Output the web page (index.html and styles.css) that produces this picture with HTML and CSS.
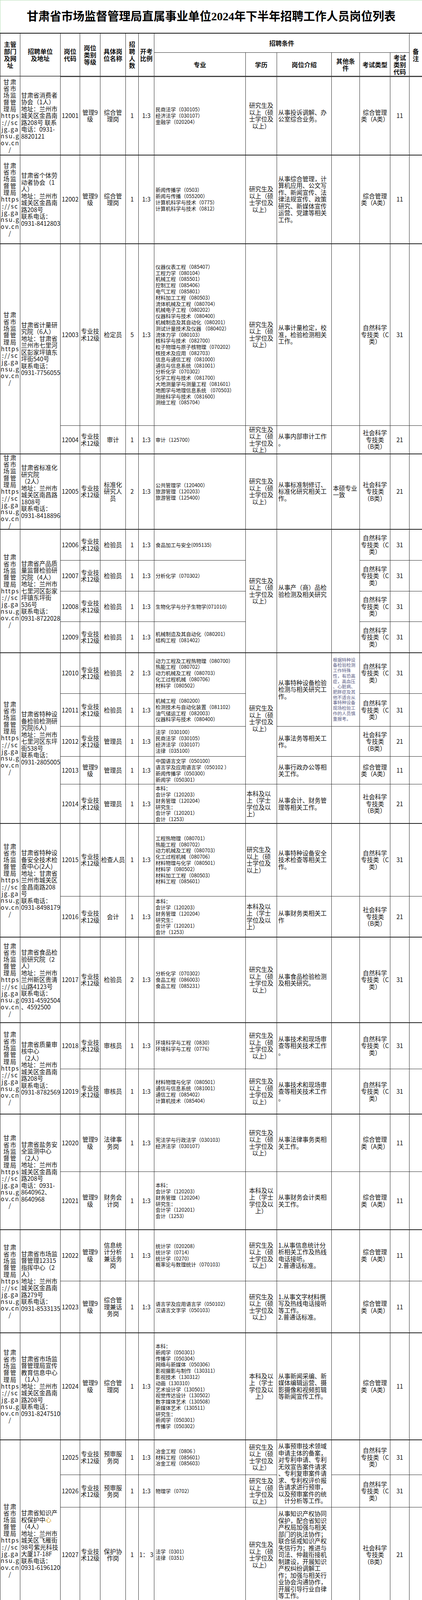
FILE: index.html
```html
<!DOCTYPE html>
<html lang="zh-CN">
<head>
<meta charset="utf-8">
<title>甘肃省市场监督管理局直属事业单位2024年下半年招聘工作人员岗位列表</title>
<link rel="stylesheet" href="styles.css">
</head>
<body>
<div class="page">
  <header class="title-bar"><h1 class="title">甘肃省市场监督管理局直属事业单位2024年下半年招聘工作人员岗位列表</h1></header>
  <div class="sheet">
    <div class="cell h r2"><span>主管<br>部门<br>及网<br>址</span></div>
    <div class="cell h r2"><span>招聘单位<br>及地址</span></div>
    <div class="cell h r2"><span>岗位<br>代码</span></div>
    <div class="cell h r2"><span>岗位<br>类别<br>等级</span></div>
    <div class="cell h r2"><span>具体岗<br>位名称</span></div>
    <div class="cell h r2"><span>招<br>聘<br>人<br>数</span></div>
    <div class="cell h r2"><span>开考<br>比例</span></div>
    <div class="cell h cond cs6"><span>招聘条件</span></div>
    <div class="cell h r2 note"><span>备<br>注</span></div>
    <div class="cell h"><span>专业</span></div>
    <div class="cell h"><span>学历</span></div>
    <div class="cell h"><span>岗位介绍</span></div>
    <div class="cell h"><span>其他条<br>件</span></div>
    <div class="cell h"><span>考试类型</span></div>
    <div class="cell h"><span>考试<br>类别<br>代码</span></div>

    <!-- 12001 -->
    <div class="cell d"><span>甘肃<br>省市<br>场监<br>督管<br>理局<br>https<br>://sc<br>jg.ga<br>nsu.g<br>ov.cn<br>/</span></div>
    <div class="cell n"><span>甘肃省消费者<br>协会（1人）<br>地址：兰州市<br>城关区金昌南<br>路208号 联系<br>电话：0931-<br>8820121</span></div>
    <div class="cell c u"><span>12001</span></div>
    <div class="cell c u"><span>管理9<br>级</span></div>
    <div class="cell c u"><span>综合管<br>理岗</span></div>
    <div class="cell c u"><span>1</span></div>
    <div class="cell c u"><span>1:3</span></div>
    <div class="cell m u"><span>民商法学（030105）<br>经济法学（030107）<br>金融学（020204）</span></div>
    <div class="cell c u"><span>研究生及<br>以上（硕<br>士学位及<br>以上）</span></div>
    <div class="cell t u"><span>从事投诉调解、办<br>公室综合业务。</span></div>
    <div class="cell t u"></div>
    <div class="cell c u"><span>综合管理<br>类（A类）</span></div>
    <div class="cell c u"><span>11</span></div>
    <div class="cell note u"></div>

    <!-- 12002 -->
    <div class="cell d u"><span>甘肃<br>省市<br>场监<br>督管<br>理局<br>https<br>://sc<br>jg.ga<br>nsu.g<br>ov.cn<br>/</span></div>
    <div class="cell n u"><span>甘肃省个体劳<br>动者协会（1<br>人）<br>地址：兰州市<br>城关区金昌南<br>路208号<br>联系电话：<br>0931-8412803</span></div>
    <div class="cell c u"><span>12002</span></div>
    <div class="cell c u"><span>管理9<br>级</span></div>
    <div class="cell c u"><span>综合管<br>理岗</span></div>
    <div class="cell c u"><span>1</span></div>
    <div class="cell c u"><span>1:3</span></div>
    <div class="cell m u"><span>新闻传播学（0503）<br>新闻与传播（055200）<br>计算机科学与技术（0775）<br>计算机科学与技术（0812）</span></div>
    <div class="cell c u"><span>研究生及<br>以上（硕<br>士学位及<br>以上）</span></div>
    <div class="cell t u"><span>从事综合管理，计<br>算机应用、公文写<br>作、新闻宣传、法<br>律法规宣传、政策<br>研究、新媒体宣传<br>运营、党建等相关<br>工作。</span></div>
    <div class="cell t u"></div>
    <div class="cell c u"><span>综合管理<br>类（A类）</span></div>
    <div class="cell c u"><span>11</span></div>
    <div class="cell note u"></div>

    <!-- 12003 / 12004 -->
    <div class="cell d u r2"><span>甘肃<br>省市<br>场监<br>督管<br>理局<br>https<br>://sc<br>jg.ga<br>nsu.g<br>ov.cn<br>/</span></div>
    <div class="cell n u r2"><span>甘肃省计量研<br>究院（6人）<br>地址：甘肃省<br>兰州市七里河<br>区彭家坪镇东<br>坪街540号<br>联系电话：<br>0931-7756055</span></div>
    <div class="cell c u"><span>12003</span></div>
    <div class="cell c u"><span>专业技<br>术12级</span></div>
    <div class="cell c u"><span>检定员</span></div>
    <div class="cell c u"><span>5</span></div>
    <div class="cell c u"><span>1:3</span></div>
    <div class="cell m u"><span>仪器仪表工程（085407）<br>工程力学（080104）<br>机械工程（085501）<br>控制工程（085406）<br>电气工程（085801）<br>材料加工工程（080503）<br>流体机械及工程（080704）<br>机械电子工程（080202）<br>仪器科学与技术（080400）<br>机械制造及其自动化（080201）<br>测试计量技术及仪器 （080402）<br>流体力学（080103）<br>核科学与技术（082700）<br>粒子物理与原子核物理（070202）<br>核技术及应用（082703）<br>信息与通信工程（081000）<br>通信与信息系统（081001）<br>分析化学（070302）<br>化学工程与技术（081700）<br>大地测量学与测量工程（081601）<br>地图学与地理信息系统 （070503）<br>测绘科学与技术（081600）<br>测绘工程（085704）</span></div>
    <div class="cell c u"><span>研究生及<br>以上（硕<br>士学位及<br>以上）</span></div>
    <div class="cell t u"><span>从事计量检定，校<br>准，检验检测相关<br>工作。</span></div>
    <div class="cell t u"></div>
    <div class="cell c u"><span>自然科学<br>专技类（C<br>类）</span></div>
    <div class="cell c u"><span>31</span></div>
    <div class="cell note u"></div>

    <div class="cell c"><span>12004</span></div>
    <div class="cell c"><span>专业技<br>术12级</span></div>
    <div class="cell c"><span>审计</span></div>
    <div class="cell c"><span>1</span></div>
    <div class="cell c"><span>1:3</span></div>
    <div class="cell m"><span>审计（125700）</span></div>
    <div class="cell c"><span>研究生及<br>以上（硕<br>士学位及<br>以上）</span></div>
    <div class="cell t"><span>从事内部审计工作<br>。</span></div>
    <div class="cell t"></div>
    <div class="cell c"><span>社会科学<br>专技类<br>（B类）</span></div>
    <div class="cell c"><span>21</span></div>
    <div class="cell note"></div>

    <!-- 12005 -->
    <div class="cell d u"><span>甘肃<br>省市<br>场监<br>督管<br>理局<br>https<br>://sc<br>jg.ga<br>nsu.g<br>ov.cn<br>/</span></div>
    <div class="cell n u"><span>甘肃省标准化<br>研究院<br>（2人）<br>地址：兰州市<br>城关区南昌路<br>1808号<br>联系电话：<br>0931-8418896</span></div>
    <div class="cell c u"><span>12005</span></div>
    <div class="cell c u"><span>专业技<br>术12级</span></div>
    <div class="cell c u"><span>标准化<br>研究人<br>员</span></div>
    <div class="cell c u"><span>2</span></div>
    <div class="cell c u"><span>1:3</span></div>
    <div class="cell m u"><span>公共管理学（120400）<br>旅游管理（120203）<br>旅游管理（125400）</span></div>
    <div class="cell c u"><span>研究生及<br>以上（硕<br>士学位及<br>以上）</span></div>
    <div class="cell t u"><span>从事标准制修订、<br>标准化研究相关工<br>作。</span></div>
    <div class="cell t u"><span>本硕专业<br>一致</span></div>
    <div class="cell c u"><span>社会科学<br>专技类<br>（B类）</span></div>
    <div class="cell c u"><span>21</span></div>
    <div class="cell note u"></div>

    <!-- 12006 - 12009 -->
    <div class="cell d u r4"><span>甘肃<br>省市<br>场监<br>督管<br>理局<br>https<br>://sc<br>jg.ga<br>nsu.g<br>ov.cn<br>/</span></div>
    <div class="cell n u r4"><span>甘肃省产品质<br>量监督检验研<br>究院（4人）<br>地址：兰州市<br>七里河区彭家<br>坪镇东坪街<br>536号<br>联系电话：<br>0931-8722028</span></div>
    <div class="cell c u"><span>12006</span></div>
    <div class="cell c u"><span>专业技<br>术12级</span></div>
    <div class="cell c u"><span>检验员</span></div>
    <div class="cell c u"><span>1</span></div>
    <div class="cell c u"><span>1:3</span></div>
    <div class="cell m u"><span>食品加工与安全(095135)</span></div>
    <div class="cell c u r4"><span>研究生及<br>以上（硕<br>士学位及<br>以上）</span></div>
    <div class="cell t u r4"><span>从事产（商）品检<br>验检测及相关研究</span></div>
    <div class="cell t u r4"></div>
    <div class="cell c u"><span>自然科学<br>专技类（C<br>类）</span></div>
    <div class="cell c u"><span>31</span></div>
    <div class="cell note u"></div>

    <div class="cell c"><span>12007</span></div>
    <div class="cell c"><span>专业技<br>术12级</span></div>
    <div class="cell c"><span>检验员</span></div>
    <div class="cell c"><span>1</span></div>
    <div class="cell c"><span>1:3</span></div>
    <div class="cell m"><span>分析化学（070302）</span></div>
    <div class="cell c"><span>自然科学<br>专技类（C<br>类）</span></div>
    <div class="cell c"><span>31</span></div>
    <div class="cell note"></div>

    <div class="cell c"><span>12008</span></div>
    <div class="cell c"><span>专业技<br>术12级</span></div>
    <div class="cell c"><span>检验员</span></div>
    <div class="cell c"><span>1</span></div>
    <div class="cell c"><span>1:3</span></div>
    <div class="cell m"><span>生物化学与分子生物学(071010)</span></div>
    <div class="cell c"><span>自然科学<br>专技类（C<br>类）</span></div>
    <div class="cell c"><span>31</span></div>
    <div class="cell note"></div>

    <div class="cell c"><span>12009</span></div>
    <div class="cell c"><span>专业技<br>术12级</span></div>
    <div class="cell c"><span>检验员</span></div>
    <div class="cell c"><span>1</span></div>
    <div class="cell c"><span>1:3</span></div>
    <div class="cell m"><span>机械制造及其自动化（080201）<br>结构工程（081402）</span></div>
    <div class="cell c"><span>自然科学<br>专技类（C<br>类）</span></div>
    <div class="cell c"><span>31</span></div>
    <div class="cell note"></div>

    <!-- 12010 - 12014 -->
    <div class="cell d u r5"><span>甘肃<br>省市<br>场监<br>督管<br>理局<br>https<br>://sc<br>jg.ga<br>nsu.g<br>ov.cn<br>/</span></div>
    <div class="cell n u r5"><span>甘肃省特种设<br>备检验检测研<br>究院(6人)<br>地址：兰州市<br>七里河区东坪<br>街538号<br>联系电话：<br>0931-2805005</span></div>
    <div class="cell c u"><span>12010</span></div>
    <div class="cell c u"><span>专业技<br>术12级</span></div>
    <div class="cell c u"><span>检验员</span></div>
    <div class="cell c u"><span>2</span></div>
    <div class="cell c u"><span>1:3</span></div>
    <div class="cell m u"><span>动力工程及工程热物理（080700）<br>热能工程（080702）<br>动力机械及工程（080703）<br>化工过程机械（080706）<br>材料学（080502）</span></div>
    <div class="cell c u r4"><span>研究生及<br>以上（硕<br>士学位及<br>以上）</span></div>
    <div class="cell t u r2"><span>从事特种设备检验<br>检测与相关研究工<br>作。</span></div>
    <div class="cell f u r2"><span>根据特种设<br>备检验检测<br>工作特殊<br>性，有恐高<br>症，高血压<br>、心脏病、<br>肥胖症及其<br>他不适合从<br>事特种设备<br>现场检验工<br>作的人员慎<br>重报考。</span></div>
    <div class="cell c u"><span>自然科学<br>专技类（C<br>类）</span></div>
    <div class="cell c u"><span>31</span></div>
    <div class="cell note u"></div>

    <div class="cell c"><span>12011</span></div>
    <div class="cell c"><span>专业技<br>术12级</span></div>
    <div class="cell c"><span>检验员</span></div>
    <div class="cell c"><span>1</span></div>
    <div class="cell c"><span>1:3</span></div>
    <div class="cell m"><span>机械工程（080200）<br>检测技术与自动化装置（081102）<br>油气储运工程（082003）<br>仪器科学与技术（080400）</span></div>
    <div class="cell c"><span>自然科学<br>专技类（C<br>类）</span></div>
    <div class="cell c"><span>31</span></div>
    <div class="cell note"></div>

    <div class="cell c"><span>12012</span></div>
    <div class="cell c"><span>专业技<br>术12级</span></div>
    <div class="cell c"><span>管理员</span></div>
    <div class="cell c"><span>1</span></div>
    <div class="cell c"><span>1:3</span></div>
    <div class="cell m"><span>法学（030100）<br>民商法学（030105）<br>经济法学（030107）<br>法律（035100）</span></div>
    <div class="cell t"><span>从事法务等相关工<br>作。</span></div>
    <div class="cell t"></div>
    <div class="cell c"><span>社会科学<br>专技类<br>（B类）</span></div>
    <div class="cell c"><span>21</span></div>
    <div class="cell note"></div>

    <div class="cell c"><span>12013</span></div>
    <div class="cell c"><span>管理9<br>级</span></div>
    <div class="cell c"><span>管理员</span></div>
    <div class="cell c"><span>1</span></div>
    <div class="cell c"><span>1:3</span></div>
    <div class="cell m"><span>中国语言文学（050100）<br>语言学及应用语言学（050102 ）<br>新闻传播学（050300）<br>新闻学（050301）</span></div>
    <div class="cell t"><span>从事行政办公等相<br>关工作。</span></div>
    <div class="cell t"></div>
    <div class="cell c"><span>综合管理<br>类（A类）</span></div>
    <div class="cell c"><span>11</span></div>
    <div class="cell note"></div>

    <div class="cell c"><span>12014</span></div>
    <div class="cell c"><span>专业技<br>术12级</span></div>
    <div class="cell c"><span>管理员</span></div>
    <div class="cell c"><span>1</span></div>
    <div class="cell c"><span>1:3</span></div>
    <div class="cell m"><span>本科：<br>会计学（120203）<br>财务管理（120204）<br>研究生：<br>会计学（120201）<br>会计（1253）</span></div>
    <div class="cell el"><span>本科及以<br>上（学士<br>学位及以<br>上）</span></div>
    <div class="cell t"><span>从事会计、财务管<br>理等相关工作。</span></div>
    <div class="cell t"></div>
    <div class="cell c"><span>社会科学<br>专技类<br>（B类）</span></div>
    <div class="cell c"><span>21</span></div>
    <div class="cell note"></div>

    <!-- 12015 / 12016 -->
    <div class="cell d u r2"><span>甘肃<br>省市<br>场监<br>督管<br>理局<br>https<br>://sc<br>jg.ga<br>nsu.g<br>ov.cn<br>/</span></div>
    <div class="cell n u r2"><span>甘肃省特种设<br>备安全技术检<br>查中心(2人)<br>地址：甘肃省<br>兰州市城关区<br>金昌南路208<br>号<br>联系电话：<br>0931-8498179</span></div>
    <div class="cell c u"><span>12015</span></div>
    <div class="cell c u"><span>专业技<br>术12级</span></div>
    <div class="cell c u tight"><span>检查人员</span></div>
    <div class="cell c u"><span>1</span></div>
    <div class="cell c u"><span>1:3</span></div>
    <div class="cell m u"><span>工程热物理（080701）<br>热能工程（080702）<br>动力机械及工程（080703）<br>化工过程机械（080706）<br>材料物理与化学（080501）<br>材料学（080502）<br>材料加工工程（080503）<br>材料工程（085601）</span></div>
    <div class="cell el u"><span>研究生及<br>以上（硕<br>士学位及<br>以上）</span></div>
    <div class="cell t u"><span>从事特种设备安全<br>技术检查等相关工<br>作。</span></div>
    <div class="cell t u"></div>
    <div class="cell c u"><span>自然科学<br>专技类（C<br>类）</span></div>
    <div class="cell c u"><span>31</span></div>
    <div class="cell note u"></div>

    <div class="cell c"><span>12016</span></div>
    <div class="cell c"><span>专业技<br>术12级</span></div>
    <div class="cell c"><span>会计</span></div>
    <div class="cell c"><span>1</span></div>
    <div class="cell c"><span>1:3</span></div>
    <div class="cell m"><span>本科：<br>会计学（120203）<br>财务管理（120204）<br>研究生：<br>会计学（120201）<br>会计（1253）</span></div>
    <div class="cell el"><span>本科及以<br>上（学士<br>学位及以<br>上）</span></div>
    <div class="cell t"><span>从事财务类相关工<br>作</span></div>
    <div class="cell t"></div>
    <div class="cell c"><span>社会科学<br>专技类<br>（B类）</span></div>
    <div class="cell c"><span>21</span></div>
    <div class="cell note"></div>

    <!-- 12017 -->
    <div class="cell d u"><span>甘肃<br>省市<br>场监<br>督管<br>理局<br>https<br>://sc<br>jg.ga<br>nsu.g<br>ov.cn<br>/</span></div>
    <div class="cell n u"><span>甘肃省食品检<br>验研究院（2<br>人）<br>地址：兰州市<br>兰州新区贵清<br>山路4123号<br>联系电话：<br>0931-4592504<br>、4592500</span></div>
    <div class="cell c u"><span>12017</span></div>
    <div class="cell c u"><span>专业技<br>术12级</span></div>
    <div class="cell c u"><span>检验员</span></div>
    <div class="cell c u"><span>2</span></div>
    <div class="cell c u"><span>1:3</span></div>
    <div class="cell m u"><span>分析化学（070302）<br>食品工程（086003）<br>食品工程（085231）</span></div>
    <div class="cell c u"><span>研究生及<br>以上（硕<br>士学位及<br>以上）</span></div>
    <div class="cell t u"><span>从事食品检验检测<br>及相关研究。</span></div>
    <div class="cell t u"></div>
    <div class="cell c u"><span>自然科学<br>专技类（C<br>类）</span></div>
    <div class="cell c u"><span>31</span></div>
    <div class="cell note u"></div>

    <!-- 12018 / 12019 -->
    <div class="cell d u r2"><span>甘肃<br>省市<br>场监<br>督管<br>理局<br>https<br>://sc<br>jg.ga<br>nsu.g<br>ov.cn<br>/</span></div>
    <div class="cell n u r2"><span>甘肃省质量审<br>核中心<br>（2人）<br>地址：兰州市<br>城关区金昌南<br>路208号<br>联系电话：<br>0931-8782569</span></div>
    <div class="cell c u"><span>12018</span></div>
    <div class="cell c u"><span>专业技<br>术12级</span></div>
    <div class="cell c u"><span>审核员</span></div>
    <div class="cell c u"><span>1</span></div>
    <div class="cell c u"><span>1:3</span></div>
    <div class="cell m u"><span>环境科学与工程（0830）<br>环境科学与工程（0776）</span></div>
    <div class="cell c u"><span>研究生及<br>以上（硕<br>士学位及<br>以上）</span></div>
    <div class="cell t u"><span>从事技术和现场审<br>查等相关技术工作<br>。</span></div>
    <div class="cell t u"></div>
    <div class="cell c u"><span>自然科学<br>专技类（C<br>类）</span></div>
    <div class="cell c u"><span>31</span></div>
    <div class="cell note u"></div>

    <div class="cell c"><span>12019</span></div>
    <div class="cell c"><span>专业技<br>术12级</span></div>
    <div class="cell c"><span>审核员</span></div>
    <div class="cell c"><span>1</span></div>
    <div class="cell c"><span>1:3</span></div>
    <div class="cell m"><span>材料物理与化学（080501）<br>通信与信息系统（081001）<br>通信工程（085402）<br>计算机技术（085404）</span></div>
    <div class="cell c"><span>研究生及<br>以上（硕<br>士学位及<br>以上）</span></div>
    <div class="cell t"><span>从事技术和现场审<br>查等相关技术工作<br>。</span></div>
    <div class="cell t"></div>
    <div class="cell c"><span>自然科学<br>专技类（C<br>类）</span></div>
    <div class="cell c"><span>31</span></div>
    <div class="cell note"></div>

    <!-- 12020 / 12021 -->
    <div class="cell d u r2"><span>甘肃<br>省市<br>场监<br>督管<br>理局<br>https<br>://sc<br>jg.ga<br>nsu.g<br>ov.cn<br>/</span></div>
    <div class="cell n u r2"><span>甘肃省盐务安<br>全监测中心<br>（2人）<br>地址：兰州市<br>城关区金昌南<br>路208号<br>电话：0931-<br>8640962、<br>8640968</span></div>
    <div class="cell c u"><span>12020</span></div>
    <div class="cell c u"><span>管理9<br>级</span></div>
    <div class="cell c u"><span>法律事<br>务岗</span></div>
    <div class="cell c u"><span>1</span></div>
    <div class="cell c u"><span>1:3</span></div>
    <div class="cell m u"><span>宪法学与行政法学（030103）<br>经济法学（030107）</span></div>
    <div class="cell c u"><span>研究生及<br>以上（硕<br>士学位及<br>以上）</span></div>
    <div class="cell t u"><span>从事法律事务类相<br>关工作。</span></div>
    <div class="cell t u"></div>
    <div class="cell c u"><span>综合管理<br>类（A类）</span></div>
    <div class="cell c u"><span>11</span></div>
    <div class="cell note u"></div>

    <div class="cell c"><span>12021</span></div>
    <div class="cell c"><span>管理9<br>级</span></div>
    <div class="cell c"><span>财务会<br>计岗</span></div>
    <div class="cell c"><span>1</span></div>
    <div class="cell c"><span>1:3</span></div>
    <div class="cell m"><span>本科：<br>会计学（120203）<br>财务管理（120204）<br>研究生：<br>会计学（120201）<br>会计（1253）</span></div>
    <div class="cell c"><span>本科及以<br>上（学士<br>学位及以<br>上）</span></div>
    <div class="cell t"><span>从事财务会计类相<br>关工作。</span></div>
    <div class="cell t"></div>
    <div class="cell c"><span>综合管理<br>类（A类）</span></div>
    <div class="cell c"><span>11</span></div>
    <div class="cell note"></div>

    <!-- 12022 / 12023 -->
    <div class="cell d u r2"><span>甘肃<br>省市<br>场监<br>督管<br>理局<br>https<br>://sc<br>jg.ga<br>nsu.g<br>ov.cn<br>/</span></div>
    <div class="cell n u r2"><span>甘肃省市场监<br>督管理12315<br>指挥中心（2<br>人）<br>地址：兰州市<br>城关区金昌南<br>路279号<br>联系电话：<br>0931-8533135</span></div>
    <div class="cell c u"><span>12022</span></div>
    <div class="cell c u"><span>管理9<br>级</span></div>
    <div class="cell c u"><span>信息统<br>计分析<br>兼话务<br>岗</span></div>
    <div class="cell c u"><span>1</span></div>
    <div class="cell c u"><span>1:3</span></div>
    <div class="cell m u"><span>统计学（020208）<br>统计学（0714）<br>统计学（0270）<br>概率论与数理统计（070103）</span></div>
    <div class="cell c u"><span>研究生及<br>以上（硕<br>士学位及<br>以上）</span></div>
    <div class="cell t u"><span>1.从事信息统计分<br>析相关工作及热线<br>电话接听。<br>2.普通话标准。</span></div>
    <div class="cell t u"></div>
    <div class="cell c u"><span>综合管理<br>类（A类）</span></div>
    <div class="cell c u"><span>11</span></div>
    <div class="cell note u"></div>

    <div class="cell c"><span>12023</span></div>
    <div class="cell c"><span>管理9<br>级</span></div>
    <div class="cell c"><span>综合管<br>理兼话<br>务岗</span></div>
    <div class="cell c"><span>1</span></div>
    <div class="cell c"><span>1:3</span></div>
    <div class="cell m"><span>语言学及应用语言学（050102）<br>汉语言文字学（050103）</span></div>
    <div class="cell c"><span>研究生及<br>以上（硕<br>士学位及<br>以上）</span></div>
    <div class="cell t"><span>1.从事文字材料撰<br>写及热线电话接听<br>等工作。<br>2.普通话标准。</span></div>
    <div class="cell t"></div>
    <div class="cell c"><span>综合管理<br>类（A类）</span></div>
    <div class="cell c"><span>11</span></div>
    <div class="cell note"></div>

    <!-- 12024 -->
    <div class="cell d u"><span>甘肃<br>省市<br>场监<br>督管<br>理局<br>https<br>://sc<br>jg.ga<br>nsu.g<br>ov.cn<br>/</span></div>
    <div class="cell n u"><span>甘肃省市场监<br>督管理局宣传<br>教育信息中心<br>（1人）<br>地址：兰州市<br>城关区金昌南<br>路208号<br>联系电话：<br>0931-8247510</span></div>
    <div class="cell c u"><span>12024</span></div>
    <div class="cell c u"><span>管理9<br>级</span></div>
    <div class="cell c u"><span>综合管<br>理岗</span></div>
    <div class="cell c u"><span>1</span></div>
    <div class="cell c u"><span>1:3</span></div>
    <div class="cell m u"><span>本科：<br>新闻学（050301）<br>传播学（050304）<br>网络与新媒体（050306）<br>影视摄影与制作（130311）<br>影视技术（130312）<br>动画（130310）<br>艺术设计学（130501）<br>视觉传达设计（130502）<br>数字媒体艺术（130508）<br>新媒体艺术（130511）<br>研究生：<br>新闻学（050301）<br>传播学（050302）</span></div>
    <div class="cell c u"><span>本科及以<br>上（学士<br>学位及以<br>上）</span></div>
    <div class="cell t u"><span>从事新闻采编、新<br>媒体编辑运营、摄<br>影摄像和视频剪辑<br>等新闻宣传工作。</span></div>
    <div class="cell t u"></div>
    <div class="cell c u"><span>综合管理<br>类（A类）</span></div>
    <div class="cell c u"><span>11</span></div>
    <div class="cell note u"></div>

    <!-- 12025 - 12028 -->
    <div class="cell d u r4"><span>甘肃<br>省市<br>场监<br>督管<br>理局<br>https<br>://sc<br>jg.ga<br>nsu.g<br>ov.cn<br>/</span></div>
    <div class="cell n u r4"><span>甘肃省知识产<br>权保护中<em class="mark">心</em><br>（4人）<br>地址：兰州市<br>城关区飞雁街<br>98号紫光科技<br>大厦17-18F<br>联系电话：<br>0931-6196120</span></div>
    <div class="cell c u"><span>12025</span></div>
    <div class="cell c u"><span>专业技<br>术12级</span></div>
    <div class="cell c u"><span>预审服<br>务岗</span></div>
    <div class="cell c u"><span>1</span></div>
    <div class="cell c u"><span>1:3</span></div>
    <div class="cell m u"><span>冶金工程（0806 ）<br>材料工程（085601）<br>冶金工程（085603）</span></div>
    <div class="cell c u"><span>研究生及<br>以上（硕<br>士学位及<br>以上）</span></div>
    <div class="cell t u r2"><span>从事预审技术领域<br>申请主体的备案，<br>对专利申请、专利<br>无效宣告案件请求<br>、专利复审案件请<br>求、专利权评价报<br>告请求进行预审，<br>以及预审案件的统<br>&#12288;计分析等工作。</span></div>
    <div class="cell t u"></div>
    <div class="cell c u"><span>自然科学<br>专技类（C<br>类）</span></div>
    <div class="cell c u"><span>31</span></div>
    <div class="cell note u"></div>

    <div class="cell c"><span>12026</span></div>
    <div class="cell c"><span>专业技<br>术12级</span></div>
    <div class="cell c"><span>预审服<br>务岗</span></div>
    <div class="cell c"><span>1</span></div>
    <div class="cell c"><span>1:3</span></div>
    <div class="cell m"><span>物理学（0702）</span></div>
    <div class="cell c"><span>研究生及<br>以上（硕<br>士学位及<br>以上）</span></div>
    <div class="cell t"></div>
    <div class="cell c"><span>自然科学<br>专技类（C<br>类）</span></div>
    <div class="cell c"><span>31</span></div>
    <div class="cell note"></div>

    <div class="cell c"><span>12027</span></div>
    <div class="cell c"><span>专业技<br>术12级</span></div>
    <div class="cell c"><span>保护协<br>作岗</span></div>
    <div class="cell c"><span>1</span></div>
    <div class="cell c"><span>1： 3</span></div>
    <div class="cell m"><span>法学（0301）<br>法律（0351）</span></div>
    <div class="cell c"><span>研究生及<br>以上（硕<br>士学位及<br>以上）</span></div>
    <div class="cell t"><span>从事知识产权协同<br>保护，配合省知识<br>产权局加强与相关<br>部门的执法协作；<br>联合惩戒知识产权<br>失信行为；推进与<br>司法、仲裁衔接机<br>制建设，开展知识<br>产权纠纷调解工<br>作；加强与相关行<br>业协会沟通协作，<br>开展引导行业自律<br>等工作。</span></div>
    <div class="cell t"></div>
    <div class="cell c"><span>社会科学<br>专技类<br>（B类）</span></div>
    <div class="cell c"><span>21</span></div>
    <div class="cell note"></div>

    <div class="cell c"><span>12028</span></div>
    <div class="cell c"><span>专业技<br>术12级</span></div>
    <div class="cell c"><span>导航运<br>营岗</span></div>
    <div class="cell c"><span>1</span></div>
    <div class="cell c"><span>1:3</span></div>
    <div class="cell m"><span>产业经济学（020205）</span></div>
    <div class="cell c"><span>研究生及<br>以上（硕<br>士学位及<br>以上）</span></div>
    <div class="cell t"><span>从事优势产业专利<br>导航项目组织实施<br>、知识产权运营交<br>易等相关工作。</span></div>
    <div class="cell t"></div>
    <div class="cell c"><span>自然科学<br>专技类（C<br>类）</span></div>
    <div class="cell c"><span>31</span></div>
    <div class="cell note"></div>
  </div>
</div>
</body>
</html>
```

FILE: styles.css
```css
* { box-sizing: border-box; }

html, body {
  margin: 0;
  padding: 0;
  background: #ffffff;
}

body {
  width: 1080px;
  font-family: "Noto Sans CJK SC", sans-serif;
  color: #111111;
}

.page {
  width: 1080px;
}

.title-bar {
  height: 84px;
  display: flex;
  align-items: center;
  justify-content: center;
  border-top: 1px solid #b4dcb4;
  border-left: 1px solid #b4dcb4;
}

.title {
  margin: 0;
  font-family: "Liberation Serif", "Noto Sans CJK SC", serif;
  font-weight: 700;
  font-size: 29.5px;
  line-height: 1;
  color: #000000;
  white-space: nowrap;
}

.sheet {
  display: grid;
  width: 1080px;
  grid-template-columns: 51px 103px 50px 52px 65px 33px 40px 234px 80px 140px 72px 78px 49px 32px;
  grid-template-rows:
    49px 61px
    201px 227px 466px 72px 193px
    80px 79px 78px 79px
    105px 84px 77px 71px 100px
    187px 104px 219px 119px 115px
    148px 148px 132px 132px 274px
    90px 83px 243px 99px;
  border-top: 2px solid #111111;
  border-left: 1px solid #2b2b2b;
}

.cell {
  display: flex;
  align-items: center;
  justify-content: center;
  min-width: 0;
  padding: 0 2px;
  border-right: 1px solid #2b2b2b;
  border-bottom: 1px solid #2b2b2b;
  white-space: nowrap;
  font-size: 15.5px;
  line-height: 17.5px;
  text-align: center;
}

.cell > span {
  display: block;
}

.r2 { grid-row: span 2; }
.r4 { grid-row: span 4; }
.r5 { grid-row: span 5; }
.cs6 { grid-column: span 6; }

.h {
  font-weight: 700;
  font-size: 16px;
  line-height: 18px;
  border-bottom: 2px solid #555555;
}

.h.cond {
  border-bottom: 1px solid #2b2b2b;
}

.note {
  border-right: none;
}

.u {
  box-shadow: inset 0 1px 0 #111111;
}

.d {
  letter-spacing: 2px;
  line-height: 17.3px;
}

.n {
  justify-content: flex-start;
  text-align: left;
}

.c {
  justify-content: center;
  text-align: center;
}

.tight {
  padding: 0;
  letter-spacing: -0.3px;
}

.m {
  justify-content: flex-start;
  text-align: left;
  font-size: 13px;
  line-height: 15.8px;
  padding-left: 3px;
}

.el {
  justify-content: flex-start;
  text-align: left;
}

.t {
  justify-content: flex-start;
  text-align: left;
  padding-left: 3px;
}

.f {
  justify-content: flex-start;
  text-align: left;
  font-size: 11.5px;
  line-height: 13.7px;
  color: #5a5c86;
  padding-left: 3px;
}

.mark {
  font-style: normal;
  color: #d9a21b;
}
```
